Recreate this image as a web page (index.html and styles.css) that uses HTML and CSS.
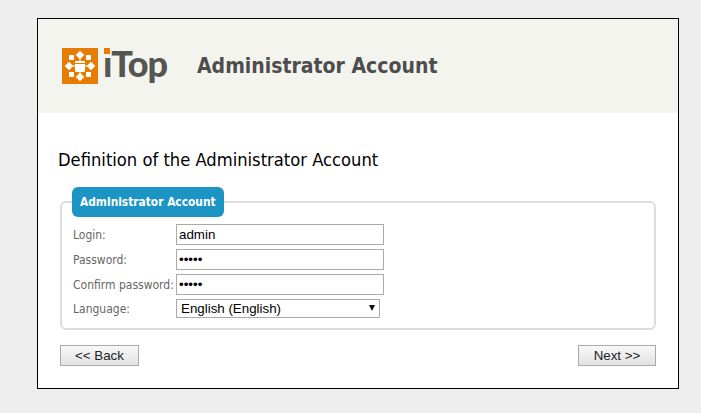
FILE: index.html
```html
<!DOCTYPE html>
<html lang="en">
<head>
  <meta charset="UTF-8" />
  <title>iTop Installation</title>
  <link rel="stylesheet" href="styles.css">
</head>
<body>
  <div class="wizard">
    <div class="header">
      <div class="logo">
        <svg class="logo-mark" width="36" height="36" viewBox="0 0 36 36">
          <rect width="36" height="36" fill="#e87c00"/>
          <g fill="#fff">
            <rect x="15" y="4" width="6" height="6" transform="rotate(45 18 7)"/>
            <rect x="15" y="26" width="6" height="6" transform="rotate(45 18 29)"/>
            <rect x="4" y="15" width="6" height="6" transform="rotate(45 7 18)"/>
            <rect x="26" y="15" width="6" height="6" transform="rotate(45 29 18)"/>
            <rect x="7" y="7" width="5" height="5"/>
            <rect x="24" y="7" width="5" height="5"/>
            <rect x="7" y="24" width="5" height="5"/>
            <rect x="24" y="24" width="5" height="5"/>
            <rect x="13" y="13" width="10" height="11" rx="1"/>
            <rect x="9" y="17.5" width="18" height="1"/>
            <rect x="17.5" y="9" width="1" height="18"/>
          </g>
          <rect x="13" y="15" width="10" height="1" fill="#e87c00"/>
        </svg>
        <span class="logo-text"><span class="logo-i">ı</span>Top</span>
      </div>
      <h1>Administrator Account</h1>
    </div>

    <div class="content">
      <h2>Definition of the Administrator Account</h2>

      <fieldset class="account">
        <legend>Administrator Account</legend>
        <div class="form-grid">
          <label for="login">Login:</label>
          <input type="text" id="login" value="admin" />
          <label for="pwd">Password:</label>
          <input type="password" id="pwd" value="admin" />
          <label for="confirm">Confirm password:</label>
          <input type="password" id="confirm" value="admin" />
          <label for="language">Language:</label>
          <div class="select-wrap">
            <select id="language">
              <option>English (English)</option>
            </select>
          </div>
        </div>
      </fieldset>

      <div class="buttons">
        <button class="back">&lt;&lt; Back</button>
        <button class="next">Next &gt;&gt;</button>
      </div>
    </div>
  </div>
</body>
</html>
```

FILE: styles.css
```css
html, body {
  margin: 0;
  height: 413px;
  overflow: hidden;
}
body {
  background: #eee;
  font-family: "DejaVu Sans", sans-serif;
  font-stretch: condensed;
  padding: 18px 22px 0 37px;
  box-sizing: border-box;
}
.wizard {
  background: #fff;
  border: 1px solid #000;
  height: 371px;
  box-sizing: border-box;
}
.header {
  background: #f4f4ef;
  height: 94px;
  display: flex;
  align-items: center;
  padding-left: 24px;
}
.logo {
  display: flex;
  align-items: center;
  width: 135px;
}
.logo-mark {
  flex: none;
}
.logo-text {
  position: relative;
  font-family: "Lato", sans-serif;
  font-weight: 900;
  font-size: 36px;
  line-height: 30px;
  letter-spacing: -1px;
  color: #555551;
  margin-left: 5px;
  padding-bottom: 6px;
}
.logo-i::before {
  content: "";
  position: absolute;
  left: 1px;
  top: 0;
  width: 6px;
  height: 6px;
  background: #e87c00;
}
h1 {
  margin: 0;
  font-size: 21px;
  font-weight: 700;
  color: #4d4d4d;
}
.content {
  padding: 0 22px 0 20px;
}
h2 {
  margin: 0;
  padding-top: 36px;
  font-size: 18.2px;
  font-weight: 400;
  line-height: 22px;
  color: #000;
}
.account {
  margin: 16px 0 0 2px;
  padding: 7px 10px 10px 11px;
  border: 2px solid #ddd;
  border-radius: 6px;
  min-width: 0;
}
legend {
  background: #1c94c4;
  color: #fff;
  font-size: 11.85px;
  font-weight: 700;
  line-height: 29px;
  padding: 1px 8px 0;
  border-radius: 6px;
  margin-left: -1px;
}
.form-grid {
  display: grid;
  grid-template-columns: 103px 208px;
  row-gap: 4px;
  align-items: center;
}
label {
  font-size: 12px;
  color: #666;
  white-space: nowrap;
}
input {
  box-sizing: border-box;
  height: 21px;
  width: 208px;
  margin: 0;
  padding: 1px 2px;
  border: 1px solid #aaa;
  font-family: "Liberation Sans", sans-serif;
  font-size: 13.33px;
  color: #000;
}
.select-wrap {
  position: relative;
  width: 204px;
  height: 19px;
}
.select-wrap::after {
  content: "";
  position: absolute;
  right: 5px;
  top: 6px;
  border-left: 3.5px solid transparent;
  border-right: 3.5px solid transparent;
  border-top: 6px solid #111;
  pointer-events: none;
}
select {
  display: block;
  appearance: none;
  box-sizing: border-box;
  height: 19px;
  width: 204px;
  margin: 0;
  padding: 0 4px;
  border: 1px solid #aaa;
  border-radius: 0;
  background: #fff;
  font-family: "Liberation Sans", sans-serif;
  font-size: 13.33px;
  color: #000;
}
.buttons {
  display: flex;
  justify-content: space-between;
  margin: 15px 0 0 2px;
}
button {
  box-sizing: border-box;
  height: 21px;
  padding: 0;
  border: 1px solid #aaa;
  background: linear-gradient(#f8f8f8, #e2e2e2);
  font-family: "Liberation Sans", sans-serif;
  font-size: 13.33px;
  color: #222;
}
.back {
  width: 79px;
}
.next {
  width: 78px;
}
```
